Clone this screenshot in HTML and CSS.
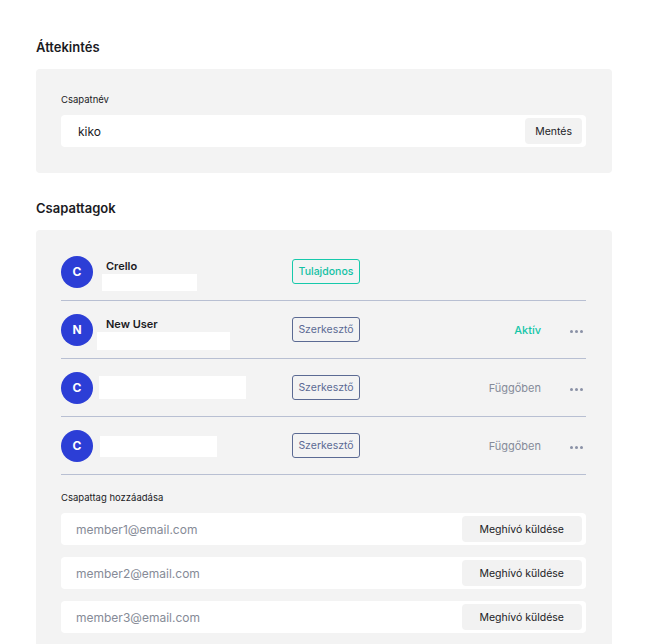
FILE: index.html
```html
<!DOCTYPE html>
<html lang="hu">

<head>
 <meta charset="UTF-8">
 <meta name="viewport" content="width=device-width, initial-scale=1.0">
 <title>Csapat beállítások</title>
 <link rel="stylesheet" href="styles.css">
</head>

<body>
 <main class="page">
  <h2 class="section-title">Áttekintés</h2>
  <section class="card card-overview">
   <label class="field-label" for="teamName">Csapatnév</label>
   <div class="field">
    <input type="text" id="teamName" class="field-input" value="kiko">
    <button class="field-btn btn-save">Mentés</button>
   </div>
  </section>

  <h2 class="section-title">Csapattagok</h2>
  <section class="card card-members">
   <ul class="members">
    <li class="member">
     <span class="avatar">C</span>
     <div class="who who-named">
      <span class="name">Crello</span>
      <span class="mask mask-1"></span>
     </div>
     <span class="role role-owner">Tulajdonos</span>
     <span class="status"></span>
     <span class="more"></span>
    </li>
    <li class="member">
     <span class="avatar">N</span>
     <div class="who who-named">
      <span class="name">New User</span>
      <span class="mask mask-2"></span>
     </div>
     <span class="role">Szerkesztő</span>
     <span class="status status-active">Aktív</span>
     <span class="more"><i></i><i></i><i></i></span>
    </li>
    <li class="member">
     <span class="avatar">C</span>
     <div class="who">
      <span class="mask mask-3"></span>
     </div>
     <span class="role">Szerkesztő</span>
     <span class="status">Függőben</span>
     <span class="more"><i></i><i></i><i></i></span>
    </li>
    <li class="member">
     <span class="avatar">C</span>
     <div class="who">
      <span class="mask mask-4"></span>
     </div>
     <span class="role">Szerkesztő</span>
     <span class="status">Függőben</span>
     <span class="more"><i></i><i></i><i></i></span>
    </li>
   </ul>

   <div class="invite">
    <label class="field-label">Csapattag hozzáadása</label>
    <div class="field">
     <input type="email" class="field-input" placeholder="member1@email.com">
     <button class="field-btn">Meghívó küldése</button>
    </div>
    <div class="field">
     <input type="email" class="field-input" placeholder="member2@email.com">
     <button class="field-btn">Meghívó küldése</button>
    </div>
    <div class="field">
     <input type="email" class="field-input" placeholder="member3@email.com">
     <button class="field-btn">Meghívó küldése</button>
    </div>
   </div>
  </section>
 </main>
</body>

</html>
```

FILE: styles.css
```css
body {
 margin: 0;
 background-color: #fff;
 font-family: 'Inter', 'Noto Sans', sans-serif;
 color: #1b1b1f;
}

.page {
 width: 576px;
 padding: 38px 0 0 36px;
}

.section-title {
 margin: 0 0 13px 0;
 font-size: 13px;
 line-height: 18px;
 font-weight: 600;
}

.card {
 background-color: #f3f3f3;
 border-radius: 4px;
 padding: 0 26px 0 25px;
}

.card-overview {
 padding-top: 25px;
 padding-bottom: 26px;
 margin-bottom: 26px;
}

.field-label {
 display: block;
 font-size: 9.5px;
 line-height: 12px;
 margin-bottom: 9px;
 color: #1b1b1f;
}

.field {
 display: flex;
 align-items: center;
 height: 32px;
 background-color: #fff;
 border-radius: 4px;
 padding: 0 4px 0 17px;
}

.field + .field {
 margin-top: 12px;
}

.field-input {
 flex: 1;
 min-width: 0;
 border: 0;
 outline: none;
 background: transparent;
 padding: 0;
 font-family: inherit;
 font-size: 12px;
 color: #1b1b1f;
}

.invite .field-input {
 margin-left: -2px;
}

.field-input::placeholder {
 color: #868b97;
}

.field-btn {
 height: 26px;
 padding: 0 18px;
 border: 0;
 border-radius: 4px;
 background-color: #f2f2f2;
 font-family: inherit;
 font-size: 10.5px;
 color: #1b1b1f;
}

.btn-save {
 padding: 0 10px;
}

/* member list */
.card-members {
 padding-top: 13px;
 padding-bottom: 20px;
}

.members {
 list-style: none;
 margin: 0;
 padding: 0;
}

.member {
 display: flex;
 align-items: center;
 height: 57px;
 border-bottom: 1px solid #b8bfd2;
}

.avatar {
 flex: none;
 width: 32px;
 height: 32px;
 border-radius: 50%;
 background-color: #2c3ed6;
 color: #fff;
 font-size: 12px;
 font-weight: 700;
 display: flex;
 align-items: center;
 justify-content: center;
}

.who {
 width: 186px;
 display: flex;
 flex-direction: column;
 padding-left: 13px;
}

.who-named {
 padding-top: 8px;
}

.name {
 font-size: 11px;
 font-weight: 600;
 line-height: 13px;
}

.mask {
 display: block;
 background-color: #fff;
}

.mask-1 { width: 95px; height: 17px; margin: 1px 0 0 -4px; }
.mask-2 { width: 133px; height: 18px; margin: 1px 0 0 -9px; }
.mask-3 { width: 147px; height: 23px; margin-left: -7px; }
.mask-4 { width: 117px; height: 21px; margin: 1px 0 0 -6px; }

.role {
 flex: none;
 width: 66px;
 height: 23px;
 border: 1px solid #5b6a93;
 border-radius: 3px;
 color: #5b6a93;
 font-size: 10.5px;
 display: flex;
 align-items: center;
 justify-content: center;
}

.role-owner {
 border-color: #16c9ab;
 color: #13c1a4;
 font-weight: 500;
}

.status {
 flex: 1;
 text-align: right;
 font-size: 11px;
 color: #858b99;
}

.status-active {
 color: #13c6a8;
 font-weight: 500;
}

.more {
 width: 42px;
 display: flex;
 justify-content: flex-end;
 gap: 2px;
 padding: 4px 3px 0 0;
}

.more i {
 width: 3px;
 height: 3px;
 border-radius: 50%;
 background-color: #8a91a6;
}

.invite {
 padding-top: 17px;
}
```
